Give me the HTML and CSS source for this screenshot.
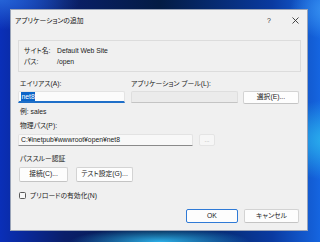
FILE: index.html
```html
<!DOCTYPE html>
<html lang="ja">
<head>
  <meta charset="UTF-8" />
  <meta name="viewport" content="width=device-width, initial-scale=1.0" />
  <title>アプリケーションの追加</title>
  <link rel="stylesheet" href="styles.css">
</head>
<body>
  <div class="dialog">
    <div class="titlebar">
      <span class="title">アプリケーションの追加</span>
      <span class="help">?</span>
      <span class="close">
        <svg width="7" height="7" viewBox="0 0 7 7"><path d="M0.5 0.5L6.5 6.5M6.5 0.5L0.5 6.5" stroke="#333" stroke-width="0.9"/></svg>
      </span>
    </div>

    <div class="content">
      <div class="sitebox">
        <div class="siterow"><span class="sitekey">サイト名:</span><span>Default Web Site</span></div>
        <div class="siterow"><span class="sitekey">パス:</span><span>/open</span></div>
      </div>

      <div class="pair">
        <div class="col alias">
          <div class="label">エイリアス(A):</div>
          <div class="field focused"><span class="sel">net8</span></div>
        </div>
        <div class="col pool">
          <div class="label">アプリケーション プール(L):</div>
          <div class="poolrow">
            <div class="field disabled"></div>
            <button class="btn select">選択(E)...</button>
          </div>
        </div>
      </div>

      <div class="label hint">例: sales</div>

      <div class="label gap">物理パス(P):</div>
      <div class="pathrow">
        <div class="field path">C:¥inetpub¥wwwroot¥open¥net8</div>
        <button class="btn dots">...</button>
      </div>

      <div class="label section">パススルー認証</div>
      <div class="authrow">
        <button class="btn connect">接続(C)...</button>
        <button class="btn test">テスト設定(G)...</button>
      </div>

      <label class="check"><span class="box"></span>プリロードの有効化(N)</label>

      <div class="footer">
        <button class="btn ok">OK</button>
        <button class="btn cancel">キャンセル</button>
      </div>
    </div>
  </div>
</body>
</html>
```

FILE: styles.css
```css
html, body {
  margin: 0;
  padding: 0;
  width: 320px;
  height: 242px;
  overflow: hidden;
}

body {
  font-family: "Liberation Sans", "Noto Sans CJK JP", sans-serif;
  font-size: 6.8px;
  font-feature-settings: "palt";
  color: #222;
  box-sizing: border-box;
  padding: 9px 12px 11px 10px;
  background:
    radial-gradient(ellipse 60px 40px at 330px 140px, #2bb4ee 0%, rgba(43,180,238,0) 100%),
    radial-gradient(ellipse 90px 14px at 160px 242px, #2cb0ea 0%, rgba(44,176,234,0) 100%),
    radial-gradient(ellipse 40px 30px at 330px 10px, #3a95f2 0%, rgba(58,149,242,0) 100%),
    radial-gradient(ellipse 80px 30px at 0px 0px, #2563d6 0%, rgba(37,99,214,0) 100%),
    linear-gradient(to right, #0a2fb8 0%, #0a1f6a 20%, #031c44 50%, #0a3aa0 85%, #1565e0 100%);
}

.dialog {
  width: 298px;
  height: 222px;
  box-sizing: border-box;
  background: #f0f0f0;
  border: 1px solid #9aa4b8;
  display: flex;
  flex-direction: column;
}

.titlebar {
  height: 20px;
  display: flex;
  align-items: center;
  padding: 0 0 0 4px;
  color: #111;
}

.title {
  flex: 1;
}

.help {
  width: 14px;
  text-align: center;
  margin-right: 12px;
  font-size: 7px;
  color: #333;
}

.close {
  width: 14px;
  display: flex;
  justify-content: center;
  margin-right: 5px;
}

.content {
  flex: 1;
  display: flex;
  flex-direction: column;
  padding: 10px 8px 7px 7px;
}

.sitebox {
  border: 1px solid #dcdcdc;
  padding: 4px 0 4px 5px;
  margin-right: -2px;
}

.siterow {
  display: flex;
  line-height: 11px;
  height: 11px;
}

.sitekey {
  width: 33px;
  flex-shrink: 0;
}

.label {
  line-height: 11px;
  height: 11px;
  padding-left: 2px;
}

.pair {
  display: flex;
  margin-top: 6px;
}

.col .label {
  margin-bottom: 2px;
}

.alias {
  width: 108px;
}

.pool {
  margin-left: 6px;
  flex: 1;
}

.pool .label {
  padding-left: 0;
}

.poolrow {
  display: flex;
  gap: 5px;
}

.field {
  height: 12px;
  box-sizing: border-box;
  background: #fbfbfb;
  border: 1px solid #e3e3e3;
  border-bottom: 1px solid #8a8a8a;
  border-radius: 2px 2px 0 0;
  line-height: 10px;
  padding-left: 2px;
  white-space: nowrap;
}

.field.focused {
  border-bottom: 2px solid #1f6fc8;
  line-height: 10px;
}

.sel {
  background: #0a64c8;
  color: #fff;
  display: inline-block;
  line-height: 9px;
  padding: 0 0.5px;
}

.field.disabled {
  width: 107px;
  background: #ebebeb;
  border-color: #dedede;
  border-bottom-color: #c4c4c4;
}

.btn {
  font: inherit;
  color: #222;
  background: #fdfdfd;
  border: 1px solid #d3d3d3;
  border-bottom-color: #c4c4c4;
  border-radius: 2px;
  padding: 0;
  box-sizing: border-box;
  line-height: 1;
}

.select {
  width: 56px;
  height: 13px;
}

.hint {
  margin-top: 2px;
}

.gap {
  margin-top: 3px;
}

.pathrow {
  display: flex;
  margin-top: 3px;
  gap: 6px;
}

.field.path {
  width: 175px;
  background: #f8f8f8;
}

.dots {
  width: 16px;
  height: 12px;
  background: #f6f6f6;
  border-color: #e4e4e4;
  color: #a0a0a0;
  font-size: 6px;
}

.section {
  margin-top: 7px;
}

.authrow {
  display: flex;
  gap: 8px;
  margin-top: 3px;
  padding-left: 1px;
}

.connect {
  width: 49px;
  height: 15px;
}

.test {
  width: 57px;
  height: 15px;
}

.check {
  display: flex;
  align-items: center;
  margin-top: 8px;
  line-height: 11px;
  height: 11px;
  padding-left: 1px;
}

.box {
  width: 7px;
  height: 7px;
  box-sizing: border-box;
  border: 1px solid #5a5a5a;
  border-radius: 1.5px;
  background: #f7f7f7;
  margin-right: 4px;
}

.footer {
  margin-top: auto;
  display: flex;
  justify-content: flex-end;
  gap: 6px;
}

.ok, .cancel {
  height: 14px;
}

.ok {
  width: 52px;
  border: 1px solid #2f7ad6;
}

.cancel {
  width: 55px;
}
```
